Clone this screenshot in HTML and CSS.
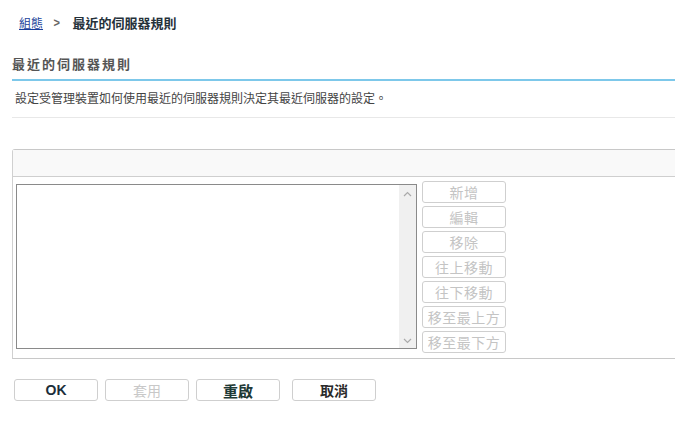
FILE: index.html
```html
<!DOCTYPE html>
<html>
<head>
<meta charset="utf-8">
<link rel="stylesheet" href="styles.css">
</head>
<body>
<div class="crumb">
  <a class="crumb-link" href="#">組態</a>
  <span class="crumb-sep">&gt;</span>
  <span class="crumb-cur">最近的伺服器規則</span>
</div>
<div class="section">
  <h2 class="title">最近的伺服器規則</h2>
  <p class="desc">設定受管理裝置如何使用最近的伺服器規則決定其最近伺服器的設定。</p>
  <div class="panel">
    <div class="panel-head"></div>
    <div class="panel-body">
      <div class="listbox">
        <div class="list-area"></div>
        <div class="scroll">
          <svg class="caret" width="9" height="6" viewBox="0 0 9 6"><path d="M1 5 L4.5 1.5 L8 5" fill="none" stroke="#aaa" stroke-width="1.2"/></svg>
          <svg class="caret" width="9" height="6" viewBox="0 0 9 6"><path d="M1 1 L4.5 4.5 L8 1" fill="none" stroke="#aaa" stroke-width="1.2"/></svg>
        </div>
      </div>
      <div class="side-btns">
        <button class="btn side">新增</button>
        <button class="btn side">編輯</button>
        <button class="btn side">移除</button>
        <button class="btn side">往上移動</button>
        <button class="btn side">往下移動</button>
        <button class="btn side">移至最上方</button>
        <button class="btn side">移至最下方</button>
      </div>
    </div>
  </div>
</div>
<div class="actions">
  <button class="btn act bold">OK</button>
  <button class="btn act dis">套用</button>
  <button class="btn act bold big">重啟</button>
  <button class="btn act mid gap">取消</button>
</div>
</body>
</html>
```
FILE: styles.css
```css
body {
  margin: 0;
  font-family: "Liberation Sans", Arial, "Noto Sans CJK TC", sans-serif;
  background: #fff;
  color: #333;
  width: 675px;
  overflow: hidden;
}
.crumb {
  height: 20px;
  padding: 12px 0 0 19px;
  display: flex;
  align-items: center;
  font-size: 12px;
  font-weight: bold;
}
.crumb-link {
  color: #1a3f9a;
  text-decoration: underline;
  font-weight: normal;
}
.crumb-sep {
  color: #666;
  margin: 0 12px 0 10px;
  font-weight: bold;
  font-size: 13px;
  transform: scaleX(0.85);
}
.crumb-cur {
  color: #25313a;
  font-size: 13px;
}
.section {
  padding-left: 12px;
  margin-top: 24px;
}
.title {
  margin: 0;
  font-size: 13px;
  font-weight: bold;
  color: #555;
  letter-spacing: 2px;
  line-height: 18px;
  padding-bottom: 5px;
  border-bottom: 2px solid #7dc8ea;
}
.desc {
  margin: 0;
  font-size: 12px;
  color: #444;
  padding: 10px 0 10px 3px;
  line-height: 16px;
  border-bottom: 1px solid #e8e8e8;
}
.panel {
  margin-top: 31px;
  border-top: 1px solid #c8c8c8;
  border-left: 1px solid #d0d0d0;
  border-bottom: 1px solid #c8c8c8;
  border-top-left-radius: 3px;
}
.panel-head {
  height: 26px;
  background: #f9f9f9;
  border-bottom: 1px solid #cfcfcf;
}
.panel-body {
  display: flex;
  padding: 4px 0 5px 3px;
  gap: 5px;
}
.listbox {
  margin-top: 3px;
  width: 399px;
  height: 163px;
  border: 1px solid #8a8a8a;
  display: flex;
}
.list-area {
  flex: 1;
  background: #fff;
}
.scroll {
  width: 17px;
  background: #f0f0f0;
  display: flex;
  flex-direction: column;
  justify-content: space-between;
  align-items: center;
  padding: 6px 0 4px;
}
.caret {
  display: block;
}
.side-btns {
  display: flex;
  flex-direction: column;
  gap: 3px;
}
.btn {
  font-family: "Liberation Sans", Arial, "Noto Sans CJK TC", sans-serif;
  background: #fff;
  border: 1px solid #cfcfcf;
  border-radius: 3px;
  padding: 0;
  margin: 0;
}
.side {
  width: 84px;
  height: 22px;
  font-size: 14px;
  color: #c4c4c4;
  letter-spacing: 0.5px;
  white-space: nowrap;
  overflow: hidden;
}
.actions {
  display: flex;
  gap: 7px;
  padding: 20px 0 0 14px;
}
.act {
  width: 84px;
  height: 22px;
  font-size: 14px;
  color: #222;
}
.bold {
  font-weight: bold;
  color: #1c2e3a;
}
.big {
  font-size: 15px;
  color: #1f3a36;
}
.mid {
  font-weight: 600;
  color: #2a2a2a;
}
.dis {
  color: #c8c8c8;
}
.gap {
  margin-left: 5px;
}
```
